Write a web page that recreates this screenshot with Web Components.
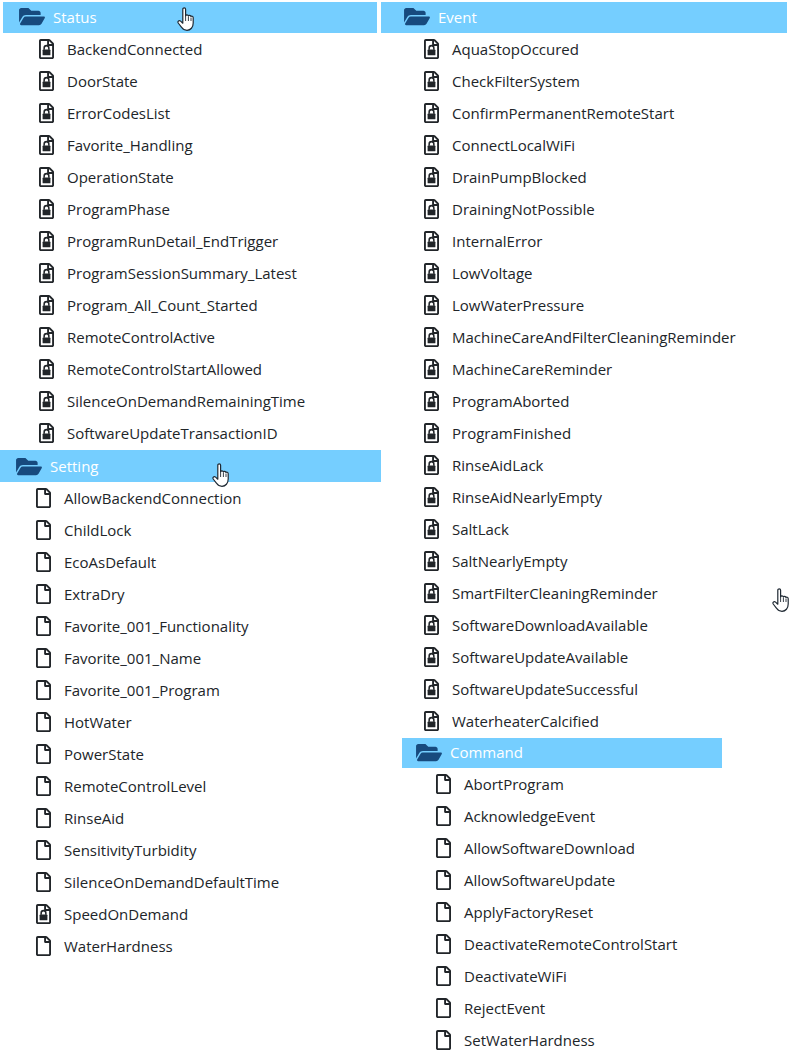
<!DOCTYPE html>
<html>
<head>
<meta charset="utf-8">
<title>Tree</title>
<style>
  html, body { margin: 0; background: #fff; }
  body { font: 15px "Open Sans", "Noto Sans", sans-serif; color: #212529; }
</style>
</head>
<body>
<tree-page>
  <tree-column slot="left" style="--col-top:2px">
    <tree-group label="Status" style="--head-left:3px;--head-width:374px;--icon-left:16px;--item-left:39px;--head-pad:2px" locked="*">
      BackendConnected,DoorState,ErrorCodesList,Favorite_Handling,OperationState,ProgramPhase,ProgramRunDetail_EndTrigger,ProgramSessionSummary_Latest,Program_All_Count_Started,RemoteControlActive,RemoteControlStartAllowed,SilenceOnDemandRemainingTime,SoftwareUpdateTransactionID
    </tree-group>
    <tree-group label="Setting" style="--head-left:0px;--head-width:381px;--icon-left:16px;--item-left:36px;--head-top:1px;--head-h:32px" locked="SpeedOnDemand">
      AllowBackendConnection,ChildLock,EcoAsDefault,ExtraDry,Favorite_001_Functionality,Favorite_001_Name,Favorite_001_Program,HotWater,PowerState,RemoteControlLevel,RinseAid,SensitivityTurbidity,SilenceOnDemandDefaultTime,SpeedOnDemand,WaterHardness
    </tree-group>
  </tree-column>
  <tree-column slot="right" style="--col-top:2px">
    <tree-group label="Event" style="--head-left:0px;--head-width:406px;--icon-left:23px;--item-left:43px;--head-pad:2px" locked="*">
      AquaStopOccured,CheckFilterSystem,ConfirmPermanentRemoteStart,ConnectLocalWiFi,DrainPumpBlocked,DrainingNotPossible,InternalError,LowVoltage,LowWaterPressure,MachineCareAndFilterCleaningReminder,MachineCareReminder,ProgramAborted,ProgramFinished,RinseAidLack,RinseAidNearlyEmpty,SaltLack,SaltNearlyEmpty,SmartFilterCleaningReminder,SoftwareDownloadAvailable,SoftwareUpdateAvailable,SoftwareUpdateSuccessful,WaterheaterCalcified
    </tree-group>
    <tree-group label="Command" style="--head-left:21px;--head-width:320px;--icon-left:14px;--item-left:55px;--head-top:1px;--head-h:30px;--head-pad:2px" locked="">
      AbortProgram,AcknowledgeEvent,AllowSoftwareDownload,AllowSoftwareUpdate,ApplyFactoryReset,DeactivateRemoteControlStart,DeactivateWiFi,RejectEvent,SetWaterHardness
    </tree-group>
  </tree-column>
  <hand-cursor style="left:177px;top:7px"></hand-cursor>
  <hand-cursor style="left:212px;top:463px"></hand-cursor>
  <hand-cursor style="left:772px;top:588px"></hand-cursor>
</tree-page>

<script>
// page frame: two columns side by side
class TreePage extends HTMLElement {
  constructor() {
    super();
    this.attachShadow({ mode: 'open' });
    this.shadowRoot.innerHTML = `
      <style>
        :host { display: block; position: relative; width: 804px; height: 1061px; overflow: hidden; }
        .cols { display: grid; grid-template-columns: 381px 423px; }
      </style>
      <div class="cols">
        <slot name="left"></slot>
        <slot name="right"></slot>
      </div>
      <slot></slot>
    `;
  }
}

class TreeColumn extends HTMLElement {
  constructor() {
    super();
    this.attachShadow({ mode: 'open' });
    this.shadowRoot.innerHTML = `
      <style>
        :host { display: block; padding-top: var(--col-top, 0); }
      </style>
      <slot></slot>
    `;
  }
}

const FOLDER_PATH = 'M572.694 292.093L500.27 416.248A63.997 63.997 0 0 1 444.989 448H45.025c-18.523 0-30.064-20.093-20.731-36.093l72.424-124.155A64 64 0 0 1 152 256h399.964c18.523 0 30.064 20.093 20.73 36.093zM152 224h328v-48c0-26.51-21.49-48-48-48H272l-64-64H48C21.49 64 0 85.49 0 112v278.046l69.077-118.418C86.214 242.25 117.989 224 152 224z';
const FILE_PATH = 'M369.9 97.9L286 14C277 5 264.8-.1 252.1-.1H48C21.5 0 0 21.5 0 48v416c0 26.5 21.5 48 48 48h288c26.5 0 48-21.5 48-48V131.9c0-12.7-5.1-25-14.1-34zM332.1 128H256V51.9l76.1 76.1zM48 464V48h160v104c0 13.3 10.7 24 24 24h104v288H48z';

class TreeItem extends HTMLElement {
  constructor() {
    super();
    this.attachShadow({ mode: 'open' });
  }

  connectedCallback() {
    const lock = this.hasAttribute('locked') ? `
      <rect x="92" y="268" width="200" height="150" rx="18" fill="#212529"/>
      <path d="M132 272v-42a60 60 0 0 1 120 0v42" fill="none" stroke="#212529" stroke-width="40"/>` : '';
    this.shadowRoot.innerHTML = `
      <style>
        :host { display: flex; align-items: center; height: 32px; padding-left: var(--item-left); color: #212529; white-space: nowrap; }
        svg { width: 15px; height: 20px; margin-right: 13px; flex: none; }
      </style>
      <svg viewBox="0 0 384 512"><path fill="#212529" d="${FILE_PATH}"/>${lock}</svg>
      <slot></slot>
    `;
  }
}

class TreeGroup extends HTMLElement {
  constructor() {
    super();
    this.attachShadow({ mode: 'open' });
    this.shadowRoot.innerHTML = `
      <style>
        :host { display: block; }
        .head {
          display: flex; align-items: center; height: var(--head-h, 31px); box-sizing: border-box;
          margin: var(--head-top, 0) 0 0 var(--head-left);
          width: var(--head-width); padding: 0 0 var(--head-pad, 0) var(--icon-left);
          background: #75ceff; color: #fff;
        }
        svg { width: 26px; height: 23px; margin-right: 8px; flex: none; }
      </style>
      <div class="head">
        <svg viewBox="0 0 576 512"><path fill="#174a7e" d="${FOLDER_PATH}"/></svg>
        <span id="label"></span>
      </div>
      <slot></slot>
    `;
    this.shadowRoot.getElementById('label').textContent = this.getAttribute('label');
  }

  connectedCallback() {
    const locked = this.getAttribute('locked').split(',');
    const names = this.textContent.trim().split(',');
    this.textContent = '';
    for (const name of names) {
      const item = document.createElement('tree-item');
      if (locked[0] === '*' || locked.includes(name)) item.setAttribute('locked', '');
      item.textContent = name;
      this.appendChild(item);
    }
  }
}

// the mouse pointer captured in the shot, lies over the rows
class HandCursor extends HTMLElement {
  constructor() {
    super();
    this.attachShadow({ mode: 'open' });
    this.shadowRoot.innerHTML = `
      <style>
        :host { position: absolute; display: block; width: 18px; height: 25px; }
        svg { display: block; width: 18px; height: 25px; }
      </style>
      <svg viewBox="0 0 18 25">
        <path fill="#fff" stroke="#1f2933" stroke-width="1.2" stroke-linejoin="round"
          d="M5.8 2.2c0-1.7 2.8-1.7 2.8 0v6.6c.3-1.3 2.5-1.3 2.8.2.4-1 2.3-.9 2.6.5.5-.7 2.2-.4 2.2 1.2v5.3c0 4.3-2.6 7.3-6.2 7.3-2.7 0-4.2-1-5.4-3L1.2 16c-.9-1.6.9-3.1 2.4-1.9l2.2 2.1z"/>
        <path fill="none" stroke="#1f2933" stroke-width=".9" d="M8.6 9v5M11.4 9.5v4.5M14 10.5v3.5"/>
      </svg>
    `;
  }
}

customElements.define('tree-item', TreeItem);
customElements.define('tree-group', TreeGroup);
customElements.define('tree-column', TreeColumn);
customElements.define('tree-page', TreePage);
customElements.define('hand-cursor', HandCursor);
</script>
</body>
</html>
